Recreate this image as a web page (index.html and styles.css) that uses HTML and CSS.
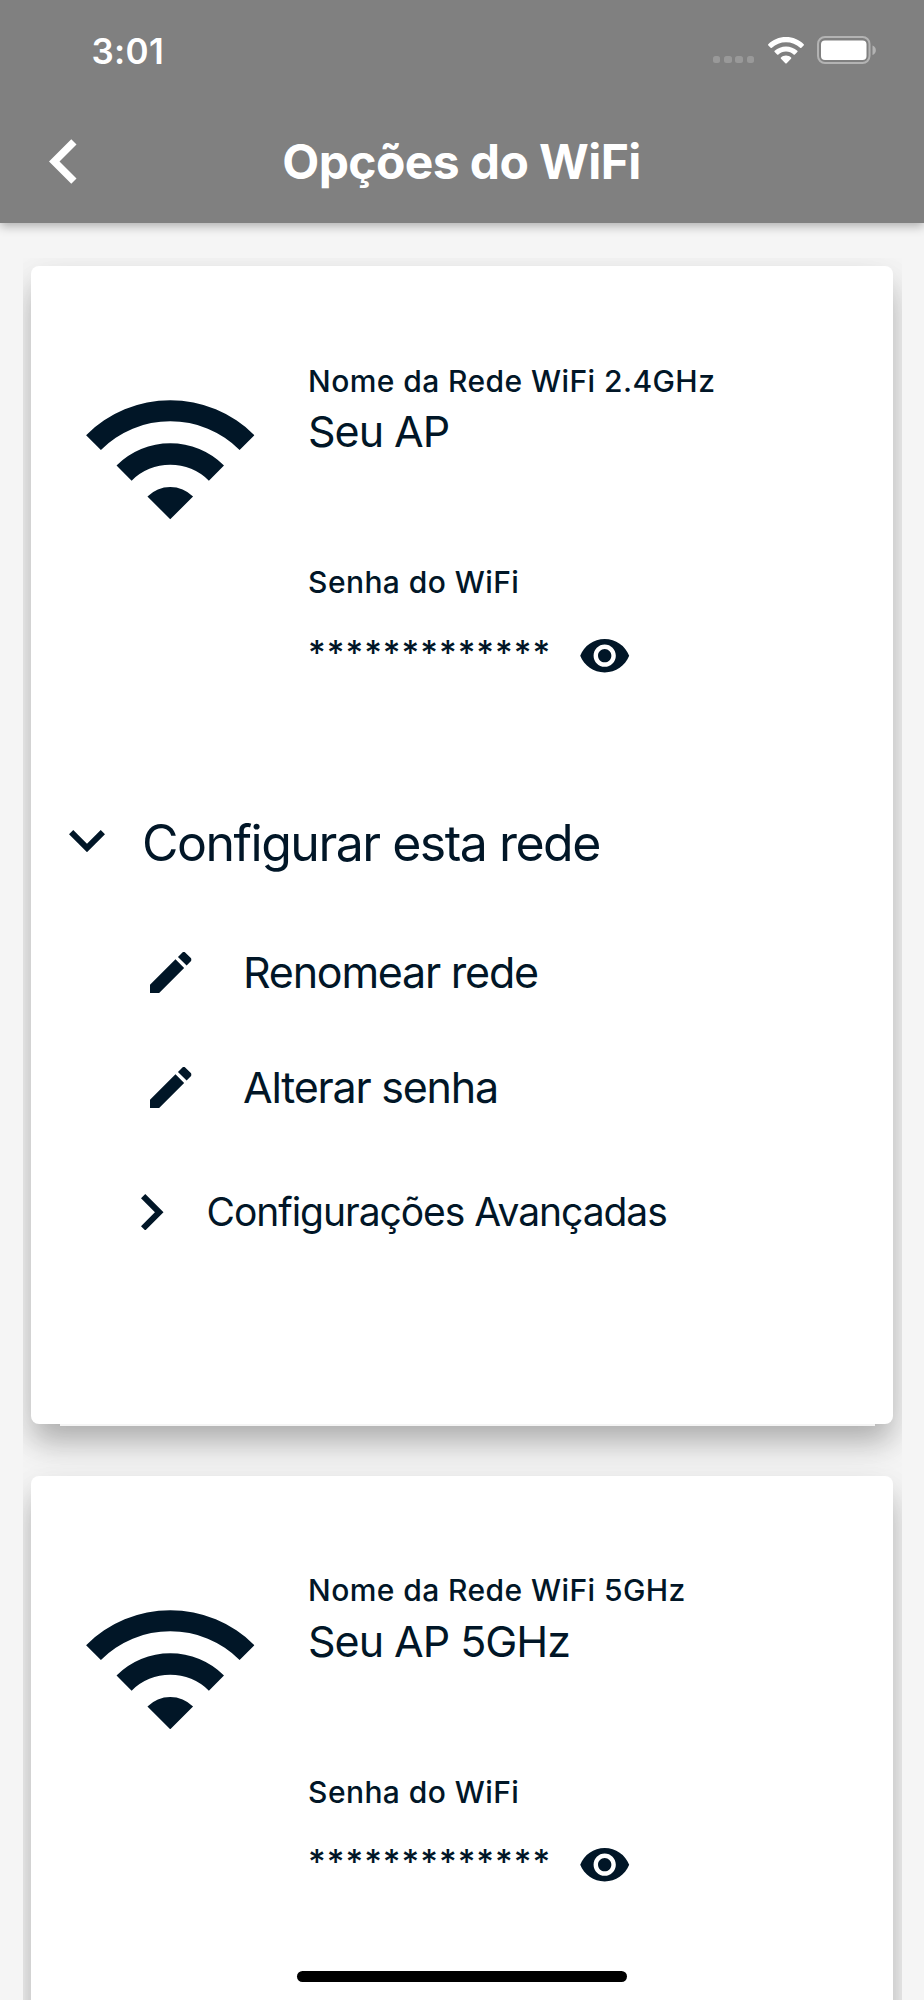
FILE: index.html
```html
<!DOCTYPE html>
<html lang="pt-BR">
<head>
<meta charset="utf-8">
<title>Opções do WiFi</title>
<link rel="stylesheet" href="styles.css">
</head>
<body>
<svg class="sprite" aria-hidden="true">
  <symbol id="wifi" viewBox="-84.2 -119 168.4 119"><path d="M-84.1-84.1A119 119 0 0 1 84.1-84.1L69.3-69.3A98 98 0 0 0-69.3-69.3ZM-53.7-53.7A76 76 0 0 1 53.7-53.7L38.6-38.6A54.6 54.6 0 0 0-38.6-38.6ZM0 0L-22.8-22.8A32.3 32.3 0 0 1 22.8-22.8Z"/></symbol>
  <symbol id="eye" viewBox="0 0 24 24"><path d="M12 4.5C7 4.5 2.73 7.61 1 12c1.73 4.39 6 7.5 11 7.5s9.27-3.11 11-7.5c-1.73-4.39-6-7.5-11-7.5zM12 17c-2.76 0-5-2.24-5-5s2.24-5 5-5 5 2.24 5 5-2.24 5-5 5zm0-8c-1.66 0-3 1.34-3 3s1.34 3 3 3 3-1.34 3-3-1.34-3-3-3z"/></symbol>
  <symbol id="pencil" viewBox="3 3 18 18"><path d="M3 17.25V21h3.75L17.81 9.94l-3.75-3.75L3 17.25zM20.71 7.04a1 1 0 0 0 0-1.41l-2.34-2.34a1 1 0 0 0-1.41 0l-1.83 1.83 3.75 3.75 1.83-1.83z"/></symbol>
</svg>
<div class="screen">
  <header class="header">
    <div class="status">
      <span class="time">3:01</span>
      <div class="status-icons">
        <div class="dots"><i></i><i></i><i></i><i></i></div>
        <svg class="status-wifi" viewBox="0 0 36 27"><path d="M18 0C25 0 31.300 2.700 35.700 7.200Q36.300 7.900 35.600 8.600L33.400 10.800Q32.800 11.400 32.100 10.800C28.400 7.300 23.400 5.300 18 5.300S7.600 7.300 3.900 10.800Q3.200 11.400 2.600 10.800L.4 8.600Q-.3 7.900.3 7.200C4.700 2.700 11 0 18 0ZM18 9.400C22.300 9.400 26.300 11 29.300 13.800Q29.900 14.500 29.300 15.100L26.900 17.500Q26.300 18.100 25.600 17.500C23.600 15.700 21 14.600 18 14.600S12.400 15.700 10.400 17.500Q9.700 18.100 9.100 17.500L6.700 15.100Q6.100 14.500 6.700 13.800C9.700 11 13.700 9.400 18 9.400ZM18 18.600C19.900 18.600 21.600 19.300 23 20.400Q23.700 21 23 21.700L18.700 26.200Q18 27 17.300 26.200L13 21.700Q12.300 21 13 20.400C14.400 19.300 16.100 18.600 18 18.600Z"/></svg>
        <svg class="battery" viewBox="0 0 60 28"><rect x="1" y="1" width="51.500" height="26" rx="7" fill="none" stroke="#b3b3b3" stroke-width="2"/><rect x="4" y="4.500" width="45.500" height="19.500" rx="4"/><path d="M55.500 9.500C60 11 60 17.500 55.500 19Z" fill="#b3b3b3"/></svg>
      </div>
    </div>
    <div class="navbar">
      <svg class="back" viewBox="8 6 7.410 12"><path d="M15.410 7.410L14 6l-6 6 6 6 1.410-1.410L10.830 12z"/></svg>
      <h1 class="title">Opções do WiFi</h1>
    </div>
  </header>

  <main class="networks">
    <section class="card">
      <div class="summary">
        <svg class="wifi"><use href="#wifi"/></svg>
        <div class="info">
          <div class="label">Nome da Rede WiFi 2.4GHz</div>
          <div class="name">Seu AP</div>
          <div class="label label-password">Senha do WiFi</div>
          <div class="password"><span class="mask">*************</span><svg class="eye"><use href="#eye"/></svg></div>
        </div>
      </div>
      <div class="row configure"><svg class="chevron-down" viewBox="6 8.590 12 7.410"><path d="M16.590 8.590L12 13.170 7.410 8.590 6 10l6 6 6-6z"/></svg><span>Configurar esta rede</span></div>
      <div class="row action rename"><svg class="pencil"><use href="#pencil"/></svg><span>Renomear rede</span></div>
      <div class="row action change"><svg class="pencil"><use href="#pencil"/></svg><span>Alterar senha</span></div>
      <div class="row advanced"><svg class="chevron-right" viewBox="8.590 6 7.410 12"><path d="M10 6L8.590 7.410 13.170 12l-4.580 4.590L10 18l6-6z"/></svg><span>Configurações Avançadas</span></div>
      <div class="card-edge"></div>
    </section>
    <section class="card">
      <div class="summary">
        <svg class="wifi"><use href="#wifi"/></svg>
        <div class="info">
          <div class="label">Nome da Rede WiFi 5GHz</div>
          <div class="name">Seu AP 5GHz</div>
          <div class="label label-password">Senha do WiFi</div>
          <div class="password"><span class="mask">*************</span><svg class="eye"><use href="#eye"/></svg></div>
        </div>
      </div>
    </section>
  </main>
  <div class="home-indicator"></div>
</div>
</body>
</html>
```
FILE: styles.css
```css
* { box-sizing: border-box; }
body { margin: 0; font-family: Inter, "Liberation Sans", sans-serif; color: #011627; background: #f5f5f5; }
svg { display: block; flex: none; fill: currentColor; }
.sprite { position: absolute; width: 0; height: 0; }
.screen { position: relative; width: 924px; height: 2000px; overflow: hidden; }

.header { position: relative; z-index: 1; height: 223px; background: #808080; color: #fff; box-shadow: 0 3px 10px rgba(0, 0, 0, .3); }
.status { display: flex; justify-content: space-between; align-items: center; height: 100px; padding: 0 48px 0 91.500px; }
.time { font-size: 35px; font-weight: 600; line-height: 40px; letter-spacing: .300px; margin-top: 2px; }
.status-icons { display: flex; align-items: center; }
.dots { display: flex; gap: 3.700px; margin: 19px 13.500px 0 0; }
.dots i { width: 7.500px; height: 7.500px; border-radius: 2.500px; background: #999; }
.status-wifi { width: 36px; height: 27px; margin-right: 13.500px; }
.battery { width: 60px; height: 28px; margin-right: -1px; }
.navbar { display: grid; grid-template-columns: 150px 1fr 150px; align-items: center; height: 123px; }
.back { width: 27.500px; height: 45px; margin: 0 0 0 49px; }
.title { margin: 0 0 0 -1px; text-align: center; font-size: 48px; line-height: 60px; font-weight: 700; letter-spacing: -.600px; white-space: nowrap; }

.networks { margin: 35px 22px 0 22.500px; height: 1742px; padding: 8px 9px 0 8.500px; overflow: hidden; }
.card { position: relative; height: 1158px; padding-top: 94.500px; background: #fff; border-radius: 8px; box-shadow: 0 20px 30px -2px rgba(0, 0, 0, .26), 0 8px 44px rgba(0, 0, 0, .07); }
.card + .card { margin-top: 51.500px; }
.card-edge { position: absolute; left: 29px; right: 18px; bottom: -2px; height: 2px; background: #f4f4f4; }
.summary { display: flex; align-items: flex-start; padding-left: 55.400px; }
.wifi { width: 168.500px; height: 119.500px; margin: 39.500px 53.200px 0 0; }
.label { font-size: 30px; line-height: 40px; font-weight: 450; letter-spacing: .420px; }
.name { margin-top: 4.500px; font-size: 43px; line-height: 52px; font-weight: 400; letter-spacing: -1.050px; }
.label-password { margin-top: 105px; }
.password { display: flex; align-items: flex-start; margin-top: 26.500px; }
.mask { width: 270.400px; margin-top: 4px; font-size: 34px; line-height: 40px; font-weight: 450; letter-spacing: 1px; }
.eye { width: 53.400px; height: 53.400px; }

.row { display: flex; align-items: center; height: 60px; white-space: nowrap; }
.configure { margin-top: 131px; padding-left: 38px; gap: 37px; font-size: 50px; letter-spacing: -1.500px; }
.chevron-down { width: 36px; height: 22.200px; margin-bottom: 3px; }
.action { padding-left: 119px; gap: 51.500px; font-size: 43px; letter-spacing: -1.230px; }
.rename { margin-top: 69px; }
.change { margin-top: 55px; }
.pencil { width: 41.500px; height: 41.500px; margin-top: 1px; }
.advanced { margin-top: 65px; padding-left: 110px; gap: 43px; font-size: 39px; letter-spacing: -1.040px; }
.chevron-right { width: 22.500px; height: 36.500px; }

.home-indicator { position: absolute; z-index: 2; left: 297px; bottom: 18px; width: 330px; height: 11px; border-radius: 6px; background: #000; }
```
